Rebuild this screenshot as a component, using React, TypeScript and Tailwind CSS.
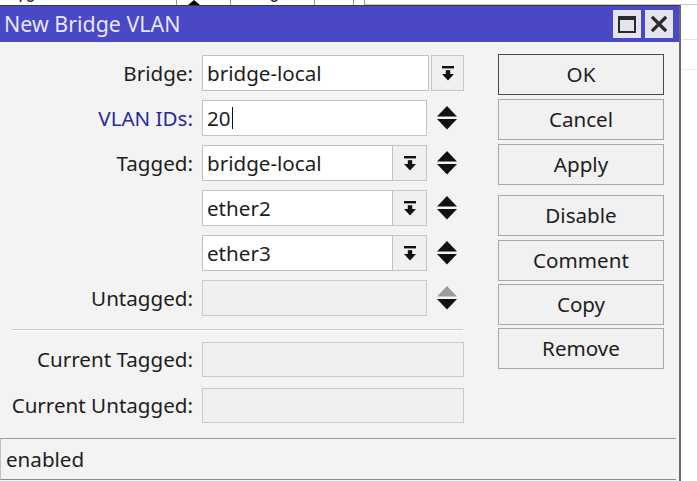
import React from "react";

function DropIcon() {
  return (
    <svg width="12" height="15" viewBox="0 0 12 15">
      <rect x="0" y="0" width="12" height="2.4" fill="#111" />
      <rect x="3.8" y="4.2" width="4.4" height="3.8" fill="#111" />
      <polygon points="0,8 12,8 6,14.5" fill="#111" />
    </svg>
  );
}

function UpDown({ disabledUp = false }: { disabledUp?: boolean }) {
  return (
    <svg width="20" height="24" viewBox="0 0 20 24">
      <polygon points="10,0 20,10.5 0,10.5" fill={disabledUp ? "#9c9c9c" : "#111"} />
      <polygon points="0,13 20,13 10,23.5" fill="#111" />
    </svg>
  );
}

function Label({ children, blue = false }: { children: React.ReactNode; blue?: boolean }) {
  return (
    <div className={`w-[193px] shrink-0 text-right whitespace-nowrap ${blue ? "text-[#2a2a9c]" : "text-[#1e1e1e]"}`}>
      {children}
    </div>
  );
}

function DropBtn({ className }: { className: string }) {
  return (
    <div className={`h-full flex items-center justify-center bg-[#f0f0f0] border border-[#c6c6c6] ${className}`}>
      <DropIcon />
    </div>
  );
}

const buttons = ["OK", "Cancel", "Apply", "Disable", "Comment", "Copy", "Remove"];

export default function App() {
  return (
    <div className="w-[697px] h-[481px] overflow-hidden bg-white flex flex-col font-['Noto_Sans',sans-serif] text-[20.6px] leading-none text-[#1e1e1e]">
      {/* background window strip */}
      <div className="h-[5px] shrink-0 flex relative overflow-hidden">
        <div className="w-[177px] border-r border-[#9a9a9a] relative">
          <span className="absolute left-[15px] top-[-14px] text-[18px] text-[#222]">10</span>
        </div>
        <div className="w-[54px] border-r border-[#9a9a9a] flex justify-center">
          <div className="w-0 h-0 border-l-[6px] border-r-[6px] border-b-[5px] border-l-transparent border-r-transparent border-b-black ml-[-20px]"></div>
        </div>
        <div className="w-[84px] border-r border-[#9a9a9a] relative">
          <span className="absolute left-[38px] top-[-14px] text-[18px] text-[#222]">0</span>
        </div>
        <div className="w-[39px] border-r border-[#9a9a9a]"></div>
        <div className="w-[11px] border-r border-[#9a9a9a]"></div>
        <div className="flex-1 border-b border-[#c8c8c8]"></div>
      </div>

      <div className="flex-1 flex min-h-0">
        {/* dialog */}
        <div className="w-[681px] shrink-0 flex flex-col bg-[#f3f3f3] border-t border-[#3a3a3a] border-r-2 border-r-[#6a6a6a]">
          {/* title bar */}
          <div className="h-[36px] shrink-0 bg-[#4a48c4] flex items-center justify-between pl-[4px] pr-[6px]">
            <span className="text-[#e6e6f6] text-[21.4px]">New Bridge VLAN</span>
            <div className="flex gap-[4px]">
              <div className="w-[28px] h-[28px] bg-[#e4e4ee] flex items-center justify-center">
                <svg width="18" height="17" viewBox="0 0 18 17">
                  <rect x="1" y="1" width="16" height="15" fill="none" stroke="#2a2a2a" strokeWidth="2" />
                  <rect x="1" y="1" width="16" height="3" fill="#2a2a2a" />
                </svg>
              </div>
              <div className="w-[28px] h-[28px] bg-[#e4e4ee] flex items-center justify-center">
                <svg width="16" height="16" viewBox="0 0 16 16">
                  <path d="M2 2 L14 14 M14 2 L2 14" stroke="#2a2a2a" strokeWidth="3.2" strokeLinecap="square" />
                </svg>
              </div>
            </div>
          </div>

          {/* body */}
          <div className="flex-1 flex min-h-0">
            <div className="w-[498px] shrink-0 pt-[13px] flex flex-col">
              <div className="flex flex-col gap-[9px]">
                <div className="h-[36px] flex items-center">
                  <Label>Bridge:</Label>
                  <div className="ml-[9px] w-[227px] h-full bg-white border border-[#c2c2c2] flex items-center pl-[4px]">bridge-local</div>
                  <DropBtn className="ml-[2px] w-[33px]" />
                </div>
                <div className="h-[36px] flex items-center">
                  <Label blue>VLAN IDs:</Label>
                  <div className="ml-[9px] w-[225px] h-full bg-white border border-[#c2c2c2] flex items-center pl-[4px]">
                    20<span className="inline-block w-[1px] h-[22px] bg-[#111] ml-[1px]"></span>
                  </div>
                  <div className="ml-[10px] flex items-center">
                    <UpDown />
                  </div>
                </div>
                {["bridge-local", "ether2", "ether3"].map((v, i) => (
                  <div key={v} className="h-[36px] flex items-center">
                    <Label>{i === 0 ? "Tagged:" : ""}</Label>
                    <div className="ml-[9px] w-[191px] h-full bg-white border border-[#c2c2c2] flex items-center pl-[4px]">{v}</div>
                    <DropBtn className="w-[34px] border-l-0" />
                    <div className="ml-[10px] flex items-center">
                      <UpDown />
                    </div>
                  </div>
                ))}
                <div className="h-[36px] flex items-center">
                  <Label>Untagged:</Label>
                  <div className="ml-[9px] w-[225px] h-full bg-[#f0f0f0] border border-[#cacaca]"></div>
                  <div className="ml-[10px] flex items-center">
                    <UpDown disabledUp />
                  </div>
                </div>
              </div>

              <div className="mt-[13px] ml-[12px] w-[451px] h-[2px] border-t border-[#c8c8c8] border-b border-b-white"></div>

              <div className="mt-[11px] flex flex-col gap-[11px]">
                <div className="h-[35px] flex items-center">
                  <Label>Current Tagged:</Label>
                  <div className="ml-[9px] w-[262px] h-full bg-[#f0f0f0] border border-[#cacaca]"></div>
                </div>
                <div className="h-[35px] flex items-center">
                  <Label>Current Untagged:</Label>
                  <div className="ml-[9px] w-[262px] h-full bg-[#f0f0f0] border border-[#cacaca]"></div>
                </div>
              </div>
            </div>

            <div className="w-[166px] shrink-0 pt-[12px] flex flex-col">
              {buttons.map((b, i) => (
                <div
                  key={b}
                  className={`h-[41px] shrink-0 flex items-center justify-center bg-[#f1f1f1] border ${
                    i === 0 ? "border-[#4a4a4a]" : "border-[#a8a8a8]"
                  } ${i === 0 ? "" : i === 3 ? "mt-[10px]" : i >= 5 ? "mt-[3px]" : "mt-[4px]"}`}
                >
                  {b}
                </div>
              ))}
            </div>
          </div>

          {/* status bar */}
          <div className="h-[42px] shrink-0 mr-[3px] mb-[1px] border-t border-[#9c9c9c] border-b border-b-[#8a8a8a] border-l border-l-[#c0c0c0] flex items-center pl-[5px]">
            enabled
          </div>
        </div>

        {/* right strip of background window */}
        <div className="flex-1 bg-white flex flex-col">
          <div className="h-[35px] border-b border-[#e2e2e2]"></div>
          <div className="h-[30px] border-b border-[#ececec]"></div>
        </div>
      </div>
    </div>
  );
}
